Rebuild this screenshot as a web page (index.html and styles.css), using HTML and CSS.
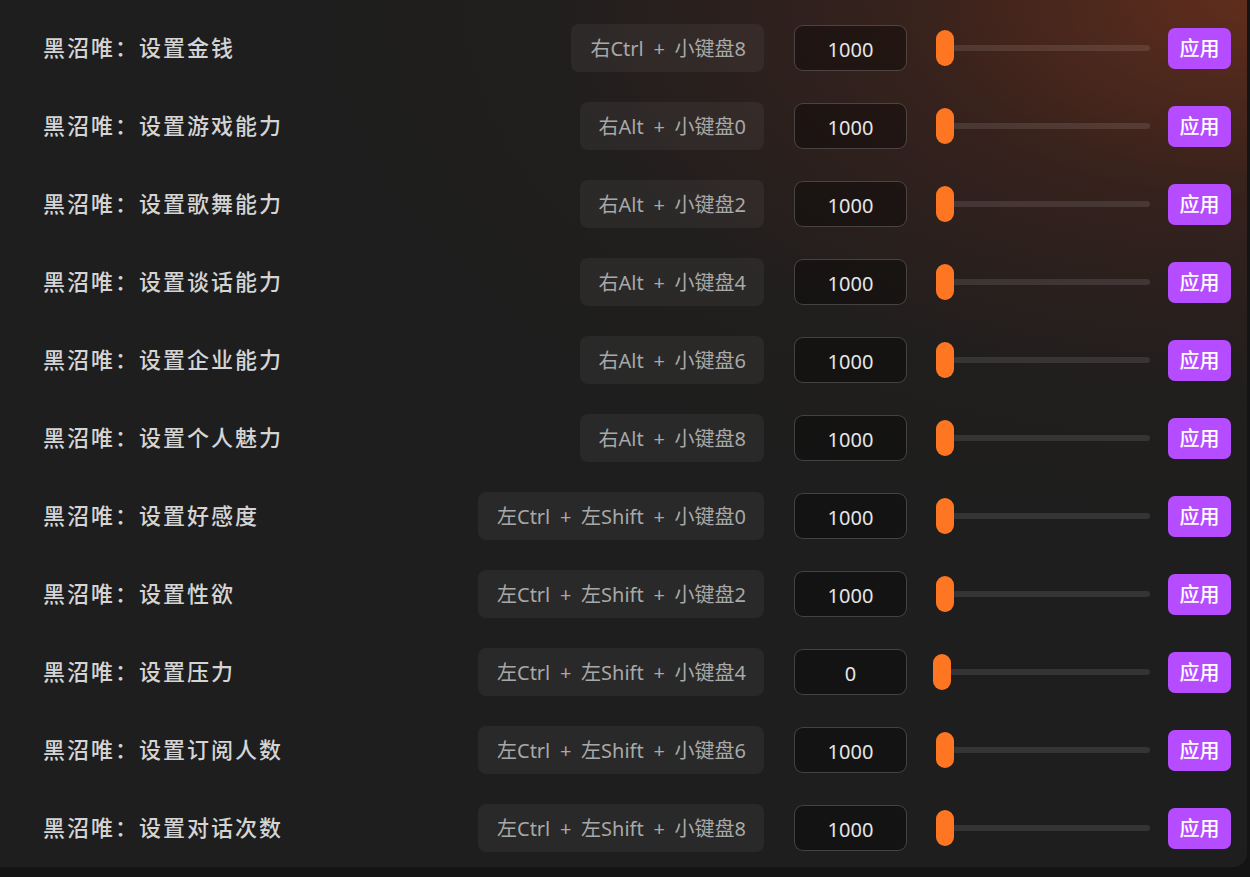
FILE: index.html
```html
<!DOCTYPE html>
<html lang="zh">
<head>
<meta charset="utf-8">
<link rel="stylesheet" href="styles.css">
</head>
<body>
<div class="panel">
  <div class="row"><div class="label">黑沼唯：设置金钱</div><div class="hotkey">右Ctrl + 小键盘8</div><div class="field">1000</div><div class="slider"><div class="track"></div><div class="thumb" style="left:2px"></div></div><button class="apply">应用</button></div>
  <div class="row"><div class="label">黑沼唯：设置游戏能力</div><div class="hotkey">右Alt + 小键盘0</div><div class="field">1000</div><div class="slider"><div class="track"></div><div class="thumb" style="left:2px"></div></div><button class="apply">应用</button></div>
  <div class="row"><div class="label">黑沼唯：设置歌舞能力</div><div class="hotkey">右Alt + 小键盘2</div><div class="field">1000</div><div class="slider"><div class="track"></div><div class="thumb" style="left:2px"></div></div><button class="apply">应用</button></div>
  <div class="row"><div class="label">黑沼唯：设置谈话能力</div><div class="hotkey">右Alt + 小键盘4</div><div class="field">1000</div><div class="slider"><div class="track"></div><div class="thumb" style="left:2px"></div></div><button class="apply">应用</button></div>
  <div class="row"><div class="label">黑沼唯：设置企业能力</div><div class="hotkey">右Alt + 小键盘6</div><div class="field">1000</div><div class="slider"><div class="track"></div><div class="thumb" style="left:2px"></div></div><button class="apply">应用</button></div>
  <div class="row"><div class="label">黑沼唯：设置个人魅力</div><div class="hotkey">右Alt + 小键盘8</div><div class="field">1000</div><div class="slider"><div class="track"></div><div class="thumb" style="left:2px"></div></div><button class="apply">应用</button></div>
  <div class="row"><div class="label">黑沼唯：设置好感度</div><div class="hotkey">左Ctrl + 左Shift + 小键盘0</div><div class="field">1000</div><div class="slider"><div class="track"></div><div class="thumb" style="left:2px"></div></div><button class="apply">应用</button></div>
  <div class="row"><div class="label">黑沼唯：设置性欲</div><div class="hotkey">左Ctrl + 左Shift + 小键盘2</div><div class="field">1000</div><div class="slider"><div class="track"></div><div class="thumb" style="left:2px"></div></div><button class="apply">应用</button></div>
  <div class="row"><div class="label">黑沼唯：设置压力</div><div class="hotkey">左Ctrl + 左Shift + 小键盘4</div><div class="field">0</div><div class="slider"><div class="track"></div><div class="thumb" style="left:-1px"></div></div><button class="apply">应用</button></div>
  <div class="row"><div class="label">黑沼唯：设置订阅人数</div><div class="hotkey">左Ctrl + 左Shift + 小键盘6</div><div class="field">1000</div><div class="slider"><div class="track"></div><div class="thumb" style="left:2px"></div></div><button class="apply">应用</button></div>
  <div class="row"><div class="label">黑沼唯：设置对话次数</div><div class="hotkey">左Ctrl + 左Shift + 小键盘8</div><div class="field">1000</div><div class="slider"><div class="track"></div><div class="thumb" style="left:2px"></div></div><button class="apply">应用</button></div>
</div>
</body>
</html>
```

FILE: styles.css
```css
html, body {
  margin: 0;
  padding: 0;
  background: #141414;
  font-family: "Noto Sans", "Noto Sans CJK SC", sans-serif;
}

.panel {
  width: 1247px;
  height: 867px;
  box-sizing: border-box;
  padding: 9px 16px 0 43px;
  border-radius: 0 0 14px 0;
  background:
    radial-gradient(ellipse 1000px 560px at 100% 0%, rgba(100, 46, 28, 0.95) 0%, rgba(70, 36, 28, 0.6) 35%, rgba(40, 30, 28, 0.2) 70%, rgba(30, 30, 30, 0) 100%),
    #1e1e1e;
  display: flex;
  flex-direction: column;
}

.row {
  height: 78px;
  display: flex;
  align-items: center;
}

.label {
  flex: 1;
  font-family: "Noto Sans CJK SC", sans-serif;
  font-size: 22px;
  letter-spacing: 2px;
  font-weight: 500;
  color: #d4d4d4;
  margin-top: -5px;
}

.hotkey {
  height: 48px;
  box-sizing: border-box;
  padding: 0 18px 2px 19px;
  display: flex;
  align-items: center;
  border-radius: 8px;
  background: rgba(255, 255, 255, 0.05);
  color: #a8a8a8;
  font-size: 20px;
  word-spacing: 4.5px;
  margin-right: 30px;
}

.field {
  width: 113px;
  height: 46px;
  box-sizing: border-box;
  padding-top: 3px;
  border: 1px solid rgba(255, 255, 255, 0.2);
  border-radius: 9px;
  background: rgba(0, 0, 0, 0.35);
  color: #e6e6e6;
  font-size: 20px;
  display: flex;
  align-items: center;
  justify-content: center;
  margin-right: 27px;
}

.slider {
  position: relative;
  width: 216px;
  height: 36px;
  margin-right: 18px;
}

.track {
  position: absolute;
  left: 4px;
  right: 0;
  top: 15px;
  height: 6px;
  border-radius: 3px;
  background: rgba(255, 255, 255, 0.1);
}

.thumb {
  position: absolute;
  top: 0;
  width: 18px;
  height: 36px;
  border-radius: 9px;
  background: #ff7622;
}

.apply {
  width: 63px;
  height: 41px;
  border: none;
  border-radius: 7px;
  background: #b64cff;
  color: #ffffff;
  font-family: "Noto Sans CJK SC", sans-serif;
  font-size: 20px;
  font-weight: 500;
  padding: 0 0 2px 0;
}
```
